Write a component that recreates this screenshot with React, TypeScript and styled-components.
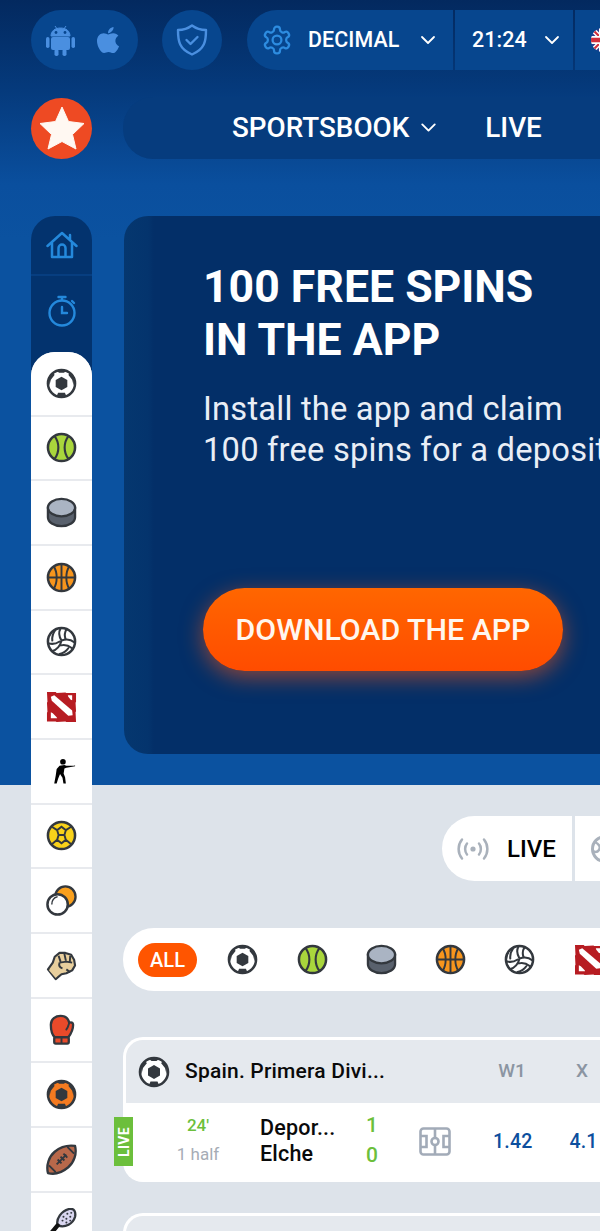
import React from "react";
import styled, { createGlobalStyle } from "styled-components";
import { FaApple } from "react-icons/fa";
import { ChevronDown } from "lucide-react";

const Global = createGlobalStyle`
  html, body { margin: 0; padding: 0; background: #dde3ea; }
  * { box-sizing: border-box; }
  body { font-family: Roboto, "Liberation Sans", sans-serif; }
  svg { flex: none; }
`;

const Page = styled.div`
  width: 600px; height: 1231px; overflow: hidden;
  background: linear-gradient(180deg, #03295f 0, #053a7c 90px, #0a4f9e 185px, #0b52a0 240px, #0b52a0 785px, #dde3ea 785px);
`;
const TopBar = styled.header`display: flex; padding: 10px 0 0 31px; height: 70px;`;
const IconPill = styled.div<{ $w: number; $ml?: number; $gap?: number }>`
  flex: none; display: flex; align-items: center; justify-content: center; gap: ${p => p.$gap ?? 0}px;
  width: ${p => p.$w}px; height: 60px; margin-left: ${p => p.$ml ?? 0}px;
  border-radius: 30px; background: #07468e; color: #4a8fe0;
`;
const Segments = styled.div`flex: none; display: flex; gap: 2px; margin-left: 25px; color: #fff;`;
const Segment = styled.div<{ $w: number; $round?: boolean; $pl: number }>`
  flex: none; display: flex; align-items: center; width: ${p => p.$w}px; height: 60px; padding-left: ${p => p.$pl}px;
  background: #07468e; border-radius: ${p => (p.$round ? "30px 0 0 30px" : "0")};
  font-size: 21.4px; font-weight: 500; letter-spacing: .1px;
`;
const SegLabel = styled.span`margin: -2px 0 0 15px;`;
const SegTime = styled.span`margin-top: -2px;`;
const SegChevron = styled(ChevronDown)<{ $ml: number }>`margin-left: ${p => p.$ml}px; flex: none;`;
const NavRow = styled.div`display: flex; align-items: center; margin-top: 27px; padding-left: 31px; height: 62px;`;
const Logo = styled.div`
  flex: none; width: 61px; height: 61px; border-radius: 50%; background: #ee4a23;
  display: flex; align-items: center; justify-content: center;
`;
const NavPill = styled.nav`
  flex: none; display: flex; align-items: center; width: 520px; height: 62px; margin-left: 31px; padding: 0 0 2px 109px;
  border-radius: 30px; background: #063c7e; color: #fff; font-size: 27.8px; font-weight: 500;
`;
const NavLive = styled.span`margin-left: 44px;`;
const NavChevron = styled(ChevronDown)`margin-left: 7px; flex: none;`;

const Main = styled.div`display: flex; margin-top: 57px; padding-left: 31px; align-items: flex-start;`;
const Rail = styled.aside`
  flex: none; width: 61px; border-radius: 24px 24px 0 0;
  background: linear-gradient(180deg, #03336e 0, #03336e 170px, transparent 170px);
`;
const RailTop = styled.div<{ $h: number; $pb?: number; $line?: boolean }>`
  height: ${p => p.$h}px; display: flex; align-items: center; justify-content: center; padding-bottom: ${p => p.$pb ?? 0}px;
  border-bottom: ${p => (p.$line ? "2px solid #073e80" : "none")};
  color: #2489dc;
`;
const RailList = styled.div`
  display: flex; flex-direction: column; gap: 2px; background: #e8eaee; border-radius: 24px 24px 0 0; overflow: hidden;
`;
const RailItem = styled.div`
  height: 62.67px; flex: none; background: #fff; display: flex; align-items: center; justify-content: center;
`;
const Content = styled.main`flex: none; width: 520px; margin-left: 32px;`;
const Banner = styled.section`
  height: 538px; padding: 45px 0 0 80px; border-radius: 24px 0 0 24px; color: #fff; white-space: nowrap;
  background: linear-gradient(90deg, #05376f 0, #04346d 24px, #032f68 30px);
`;
const Title = styled.h1`margin: 0 0 0 -1px; font-size: 44.6px; line-height: 53px; font-weight: 700;`;
const Sub = styled.p`margin: 22px 0 0 -1px; font-size: 32.7px; line-height: 41px; font-weight: 400; color: #e9eef6; letter-spacing: .2px;`;
const Download = styled.div`
  margin: 117px 0 0 -1px; width: 360px; height: 83px; border-radius: 42px; display: flex; align-items: center; justify-content: center;
  background: linear-gradient(180deg, #ff6600, #ff4c00); box-shadow: 0 6px 22px rgba(255, 90, 20, .55);
  font-size: 30.3px; font-weight: 500; color: #fff6ee;
`;
const Tabs = styled.div`display: flex; gap: 3px; margin: 62px 0 0 318px; width: 300px; height: 65px;`;
const Tab = styled.div<{ $round?: boolean; $w: number }>`
  flex: none; display: flex; align-items: center; width: ${p => p.$w}px; background: #fff; padding-left: 15px; gap: 18px;
  border-radius: ${p => (p.$round ? "33px 0 0 33px" : "0")}; color: #000; font-size: 24px; font-weight: 500;
`;
const Strip = styled.div`
  display: flex; align-items: center; gap: 38.3px; margin-top: 47px; height: 63px; width: 520px; margin-left: -1px; padding-left: 15px;
  background: #fff; border-radius: 31px 0 0 31px; overflow: hidden;
`;
const All = styled.div`
  flex: none; width: 59px; height: 34px; margin-right: -8px; border-radius: 17px; background: #ff5500; color: #fff; font-size: 20px; font-weight: 500;
  display: flex; align-items: center; justify-content: center;
`;
const Card = styled.section<{ $mt: number }>`
  position: relative; margin-top: ${p => p.$mt}px; margin-left: -1px; width: 520px; height: 145px; background: #fff; border-radius: 20px 0 0 20px; padding: 3px 0 0 3px;
`;
const CardHead = styled.div`
  display: flex; align-items: center; height: 63px; padding-left: 12px; border-radius: 17px 0 0 0; background: #e5e9ee;
`;
const League = styled.div`margin: -2px 0 0 15px; width: 302px; flex: none; font-size: 21px; font-weight: 500; color: #0a0a0a; letter-spacing: .2px; white-space: nowrap;`;
const HeadCol = styled.div<{ $w: number; $ml?: number }>`width: ${p => p.$w}px; margin-left: ${p => p.$ml ?? 0}px; margin-top: -2px; text-align: center; color: #8b95a2; font-size: 19px; font-weight: 500; flex: none;`;
const LiveTag = styled.div`
  position: absolute; left: -9px; top: 80px; width: 19px; height: 49px; background: #6cbf3c; color: #fff;
  display: flex; align-items: center; justify-content: center;
`;
const LiveText = styled.span`transform: rotate(-90deg); font-size: 14px; font-weight: 700; letter-spacing: .3px;`;
const Row = styled.div`display: flex; align-items: center; height: 76px; padding-left: 37px;`;
const TimeCol = styled.div`flex: none; width: 70px; display: flex; flex-direction: column; align-items: center; gap: 9px; margin-top: -4px;`;
const Minute = styled.div`font-size: 17px; font-weight: 500; line-height: 20px; color: #6cbf3c;`;
const Half = styled.div`font-size: 17px; font-weight: 400; line-height: 20px; color: #a6acb5;`;
const Teams = styled.div`flex: none; margin-left: 27px; width: 96px; font-size: 21.5px; font-weight: 500; line-height: 26px; color: #0a0a0a; letter-spacing: .2px;`;
const Scores = styled.div`flex: none; width: 32px; margin-top: -2px; text-align: center; font-size: 21px; font-weight: 500; line-height: 30px; color: #6cbf3c;`;
const FieldBox = styled.div`flex: none; margin-left: 31px; width: 32px; height: 29px; display: flex;`;
const Odd = styled.div<{ $ml: number }>`flex: none; margin-left: ${p => p.$ml}px; font-size: 19.5px; font-weight: 500; color: #0d4f9e; white-space: nowrap; letter-spacing: .2px;`;

const D = "#33383e";

type Kind = "soccer" | "tennis" | "puck" | "basket" | "volley" | "dota" | "cs" | "hand" | "balls" | "fist" | "glove" | "orange" | "football" | "racket";

const Sport = ({ kind, size = 31 }: { kind: Kind; size?: number }) => {
  const ball = (fill: string) => <circle cx="16" cy="16" r="14" fill={fill} stroke={D} strokeWidth="2.6" />;
  const soccerInner = (
    <>
      <path d="M16 9l6 3.500v7L16 23l-6-3.500v-7z" fill={D} />
      <path d="M11 29l1.500-3.500h7L21 29l-5 1zM3 11l4-5.500 2 1.500-4 5-1.500 6zM29 11l-4-5.500-2 1.500 4 5 1.500 6zM11 3h10l-2.500 2h-5z" fill={D} />
    </>
  );
  switch (kind) {
    case "soccer":
      return <svg width={size} height={size} viewBox="0 0 32 32">{ball("#fff")}{soccerInner}</svg>;
    case "orange":
      return <svg width={size} height={size} viewBox="0 0 32 32">{ball("#f47a20")}{soccerInner}</svg>;
    case "tennis":
      return (
        <svg width={size} height={size} viewBox="0 0 32 32">
          {ball("#a9d63c")}
          <path d="M9 4.500c5 6.500 5 16.500 0 23M23 4.500c-5 6.500-5 16.500 0 23" fill="none" stroke={D} strokeWidth="2.200" />
        </svg>
      );
    case "puck":
      return (
        <svg width={size} height={size} viewBox="0 0 32 32">
          <path d="M2 11v10c0 5 6 9 14 9s14-4 14-9V11z" fill="#59616d" stroke={D} strokeWidth="2.400" />
          <ellipse cx="16" cy="11" rx="14" ry="9" fill="#aab4c3" stroke={D} strokeWidth="2.400" />
        </svg>
      );
    case "basket":
      return (
        <svg width={size} height={size} viewBox="0 0 32 32">
          {ball("#f7951d")}
          <path d="M16 2v28M2 16h28M8 4.500c4 6 4 17 0 23M24 4.500c-4 6-4 17 0 23" fill="none" stroke={D} strokeWidth="2" />
        </svg>
      );
    case "volley":
      return (
        <svg width={size} height={size} viewBox="0 0 32 32">
          {ball("#fff")}
          <path d="M16 15C13 10 13 6 15 2.500M16 15C21 13 26 14 29.500 17M16 15C15 20 11 25 6 26M21 3.500C19 7 19 10 20 13M10 3.500C7.500 7 6 11 6.500 15M3 18C7 19 11 18 14 16M27 23C23 20 19 19 15.500 20M14 29C18 28 21 26 23 23" fill="none" stroke={D} strokeWidth="2.100" strokeLinecap="round" />
        </svg>
      );
    case "dota":
      return (
        <svg width={size} height={size} viewBox="0 0 32 32">
          <path d="M1 1h9l1 1 9-.500 1 .500h10v9l-.500 1 .500 9-.500 1 .500 10H21l-1-.500-9 .500-1-.500H1v-9l.500-1L1 12l.500-1z" fill="#b71c22" />
          <path d="M5 6l3.500-1.500L27 20l.5 5-4.500.5L6 10z" fill="#fff" />
          <path d="M22.500 4.500h4.500v5l-1.500-.5-2.500-3zM5 22l2 1 4 4 .500 1H5z" fill="#fff" />
        </svg>
      );
    case "cs":
      return (
        <svg width={size} height={size} viewBox="0 0 32 32">
          <circle cx="17.500" cy="6" r="2.900" fill="#000" />
          <path d="M14 10l5-.8 2 .8h8l1-.5v1.200l-9 1.500-2 .8-.8 5 1.500 4 .8 6.500h-2.500l-1-6-2.500-4-2 5-1.500 5h-2.500l1.500-8 1-7z" fill="#000" />
        </svg>
      );
    case "hand":
      return (
        <svg width={size} height={size} viewBox="0 0 32 32">
          {ball("#f9d21a")}
          <path d="M16 7l4.500 3.500-1.500 5 1.500 5-4.500 3.500-4.500-3.500 1.500-5-1.500-5zM13 15.500h6M11.500 10.500L6 7M20.500 10.500L26 7M11.500 20.500L6 25M20.500 20.500L26 25" fill="none" stroke={D} strokeWidth="2" />
        </svg>
      );
    case "balls":
      return (
        <svg width={size} height={size} viewBox="0 0 32 32">
          <circle cx="20" cy="12" r="10.500" fill="#f9a01e" stroke={D} strokeWidth="2.400" />
          <circle cx="12" cy="20" r="10.500" fill="#fff" stroke={D} strokeWidth="2.600" />
          <path d="M6 20c0-4 2-7 6-8" fill="none" stroke={D} strokeWidth="1.500" />
        </svg>
      );
    case "fist":
      return (
        <svg width={size} height={size} viewBox="0 0 32 32">
          <path d="M2 20l5-7 2-6 5-4 6 0 6 2 3 5 1 6-3 5-6 3-5 1-6 5z" fill="#e8cf9d" stroke={D} strokeWidth="2.200" strokeLinejoin="round" />
          <path d="M13 6l2 6M19 4l1.500 7M25 6l-.500 7M14 13l7-1 6 1M14 13c-1 3 0 5 3 6M21 20l4 3" fill="none" stroke={D} strokeWidth="2" />
          <path d="M3 21l7 8 2-3-6-6z" fill="#e8cf9d" />
        </svg>
      );
    case "glove":
      return (
        <svg width={size} height={size} viewBox="0 0 32 32">
          <path d="M9 24c-3-3-4-8-4-13 0-6 5-9 10-9 6 0 8 3 9 7 2-1 4 0 4 2 0 4-2 9-5 13z" fill="#ea4a2a" stroke={D} strokeWidth="2.400" strokeLinejoin="round" />
          <rect x="8.500" y="24" width="15" height="6.500" rx="1.500" fill="#ea4a2a" stroke={D} strokeWidth="2.400" />
          <path d="M16 24v6M24 9c-1 3-1 5-3 7" fill="none" stroke={D} strokeWidth="2" strokeLinecap="round" />
        </svg>
      );
    case "football":
      return (
        <svg width={size} height={size} viewBox="0 0 32 32">
          <path d="M2 30c-2-8 1-17 7-22S23 1 30 2c2 8-1 17-7 22S9 32 2 30z" fill="#b8684a" stroke={D} strokeWidth="2.400" strokeLinejoin="round" />
          <path d="M3 22l7 7M22 3l7 7M11 21l10-10M12 16l4 4M15 13l4 4M18 10l4 4" fill="none" stroke={D} strokeWidth="2" />
        </svg>
      );
    case "racket":
      return (
        <svg width={size} height={size} viewBox="0 0 32 32">
          <path d="M12 18C10 11 16 3 24 1c5-1 7 3 6 8-2 7-10 12-18 9z" fill="#d9d6f0" stroke={D} strokeWidth="2.400" />
          <path d="M12 18L2 30" stroke="#111" strokeWidth="4.500" strokeLinecap="round" />
          <path d="M18 9h.1M22 6h.1M26 5h.1M17 13h.1M21 11h.1M25 9h.1M21 15h.1M25 13h.1" stroke={D} strokeWidth="2" strokeLinecap="round" />
        </svg>
      );
  }
};

const Android = () => (
  <svg width="29" height="31" viewBox="0 0 29 31" fill="currentColor">
    <path d="M5 11C5 6 9 3 14.500 3S24 6 24 11zM9 1l2.500 3.500M20 1l-2.500 3.500" stroke="currentColor" strokeWidth="1" />
    <circle cx="10" cy="7.500" r="1.400" fill="#07468e" />
    <circle cx="19" cy="7.500" r="1.400" fill="#07468e" />
    <rect x="5" y="12" width="19" height="13" rx="2" />
    <rect x="0" y="12" width="3.500" height="11" rx="1.700" />
    <rect x="25.500" y="12" width="3.500" height="11" rx="1.700" />
    <rect x="8.500" y="24" width="4" height="7" rx="1.800" />
    <rect x="16.500" y="24" width="4" height="7" rx="1.800" />
  </svg>
);
const Shield = () => (
  <svg width="32" height="32" viewBox="0 0 32 32" fill="none" stroke="currentColor" strokeWidth="2.400" strokeLinejoin="round" strokeLinecap="round">
    <path d="M16 1.500c4 3 8 4.500 14 4.500 0 11-1 19-14 24.500C3 25 2 17 2 6c6 0 10-1.500 14-4.500z" />
    <path d="M10.500 16l4 4 7-7" />
  </svg>
);
const Gear = () => (
  <svg width="32" height="32" viewBox="0 0 24 24" fill="none" stroke="#2d8ce0" strokeWidth="1.700" strokeLinejoin="round">
    <path d="M12.220 2h-.44a2 2 0 0 0-2 2v.180a2 2 0 0 1-1 1.730l-.430.250a2 2 0 0 1-2 0l-.150-.080a2 2 0 0 0-2.730.730l-.220.380a2 2 0 0 0 .730 2.730l.150.100a2 2 0 0 1 1 1.720v.510a2 2 0 0 1-1 1.740l-.150.090a2 2 0 0 0-.730 2.730l.220.380a2 2 0 0 0 2.730.730l.150-.080a2 2 0 0 1 2 0l.430.250a2 2 0 0 1 1 1.730V20a2 2 0 0 0 2 2h.440a2 2 0 0 0 2-2v-.180a2 2 0 0 1 1-1.730l.430-.250a2 2 0 0 1 2 0l.150.080a2 2 0 0 0 2.730-.730l.220-.390a2 2 0 0 0-.730-2.730l-.150-.080a2 2 0 0 1-1-1.740v-.500a2 2 0 0 1 1-1.740l.150-.090a2 2 0 0 0 .730-2.730l-.220-.380a2 2 0 0 0-2.730-.730l-.150.080a2 2 0 0 1-2 0l-.430-.250a2 2 0 0 1-1-1.730V4a2 2 0 0 0-2-2z" />
    <circle cx="12" cy="12" r="3.300" />
  </svg>
);
const Flag = () => (
  <svg width="32" height="32" viewBox="0 0 32 32">
    <defs><clipPath id="fc"><circle cx="16" cy="16" r="12" /></clipPath></defs>
    <g clipPath="url(#fc)">
      <rect width="32" height="32" fill="#2c3e8f" />
      <path d="M2 2l28 28M30 2L2 30" stroke="#fff" strokeWidth="5" />
      <path d="M2 2l28 28M30 2L2 30" stroke="#d22f3c" strokeWidth="2" />
      <path d="M16 0v32M0 16h32" stroke="#fff" strokeWidth="8" />
      <path d="M16 0v32M0 16h32" stroke="#d22f3c" strokeWidth="4.500" />
    </g>
  </svg>
);
const Star = () => (
  <svg width="46" height="44" viewBox="0 0 46 44">
    <path d="M23 1l6.500 14.500L45 17.500 33.500 28.500 37 43 23 35.500 9 43l3.500-14.500L1 17.500l15.500-2z" fill="#fff8f2" stroke="#fff8f2" strokeWidth="1" strokeLinejoin="round" />
  </svg>
);
const Home = () => (
  <svg width="32" height="28" viewBox="0 0 32 28" fill="none" stroke="currentColor" strokeWidth="2.500" strokeLinejoin="round" strokeLinecap="round">
    <path d="M1.500 15L16 2l14.500 13M24 8V4" />
    <path d="M6 12v14h20V12M12.500 26v-9a3.500 3.500 0 0 1 7 0v9" />
  </svg>
);
const Timer = () => (
  <svg width="28" height="32" viewBox="0 0 28 32" fill="none" stroke="currentColor" strokeWidth="2.400" strokeLinecap="round">
    <circle cx="14" cy="18" r="12.500" />
    <path d="M10.500 2h7M14 2v3M24 6l2 2M14 12v6h5" />
  </svg>
);
const Radio = () => (
  <svg width="32" height="24" viewBox="0 0 32 24" fill="none" stroke="#a9b1bb" strokeWidth="2.500" strokeLinecap="round">
    <circle cx="16" cy="12" r="2.600" fill="#a9b1bb" stroke="none" />
    <path d="M10 6.500c-2.500 3-2.500 8 0 11M22 6.500c2.500 3 2.500 8 0 11M5 2.500c-4.500 5.500-4.500 13.500 0 19M27 2.500c4.500 5.500 4.500 13.500 0 19" />
  </svg>
);
const Globe = () => (
  <svg width="30" height="30" viewBox="0 0 30 30" fill="none" stroke="#a9b1bb" strokeWidth="3">
    <circle cx="15" cy="15" r="12.500" />
    <path d="M5 8c4 2 6 5 4 8s-5 2-6 1M20 4c-2 4-1 7 3 8l4-1M14 27c-1-4 1-7 5-7s4 3 4 4" strokeWidth="2.500" />
  </svg>
);
const Field = () => (
  <svg width="32" height="29" viewBox="0 0 32 29" fill="none" stroke="#a2abb8" strokeWidth="2.600">
    <rect x="1.500" y="1.500" width="29" height="26" rx="3" />
    <path d="M16 1.500v26M1.500 9h6v11h-6M30.500 9h-6v11h6" />
    <circle cx="16" cy="14.500" r="3.500" fill="#fff" />
  </svg>
);

const railKinds: Kind[] = ["soccer", "tennis", "puck", "basket", "volley", "dota", "cs", "hand", "balls", "fist", "glove", "orange", "football", "racket"];
const stripKinds: Kind[] = ["soccer", "tennis", "puck", "basket", "volley", "dota"];

export default function App() {
  return (
    <Page>
      <Global />
      <TopBar>
        <IconPill $w={107} $gap={18}><Android /><FaApple size={30} /></IconPill>
        <IconPill $w={60} $ml={24}><Shield /></IconPill>
        <Segments>
          <Segment $w={206} $round $pl={14}><Gear /><SegLabel>DECIMAL</SegLabel><SegChevron $ml={17} size={24} strokeWidth={1.800} /></Segment>
          <Segment $w={118} $pl={17}><SegTime>21:24</SegTime><SegChevron $ml={13} size={24} strokeWidth={1.800} /></Segment>
          <Segment $w={60} $pl={12}><Flag /></Segment>
        </Segments>
      </TopBar>
      <NavRow>
        <Logo><Star /></Logo>
        <NavPill>
          SPORTSBOOK<NavChevron size={25} strokeWidth={1.800} />
          <NavLive>LIVE</NavLive>
        </NavPill>
      </NavRow>
      <Main>
        <Rail>
          <RailTop $h={60} $line><Home /></RailTop>
          <RailTop $h={76} $pb={6}><Timer /></RailTop>
          <RailList>
            {railKinds.map((k, i) => (
              <RailItem key={i}><Sport kind={k} /></RailItem>
            ))}
          </RailList>
        </Rail>
        <Content>
          <Banner>
            <Title>100 FREE SPINS<br />IN THE APP</Title>
            <Sub>Install the app and claim<br />100 free spins for a deposit</Sub>
            <Download>DOWNLOAD THE APP</Download>
          </Banner>
          <Tabs>
            <Tab $round $w={130}><Radio />LIVE</Tab>
            <Tab $w={120}><Globe /></Tab>
          </Tabs>
          <Strip>
            <All>ALL</All>
            {stripKinds.map((k, i) => <Sport key={i} kind={k} />)}
          </Strip>
          <Card $mt={46}>
            <LiveTag><LiveText>LIVE</LiveText></LiveTag>
            <CardHead>
              <Sport kind="soccer" size={32} />
              <League>Spain. Primera Divi...</League>
              <HeadCol $w={50}>W1</HeadCol>
              <HeadCol $w={40} $ml={25}>X</HeadCol>
            </CardHead>
            <Row>
              <TimeCol><Minute>24'</Minute><Half>1 half</Half></TimeCol>
              <Teams>Depor...<br />Elche</Teams>
              <Scores>1<br />0</Scores>
              <FieldBox><Field /></FieldBox>
              <Odd $ml={42}>1.42</Odd>
              <Odd $ml={37}>4.1</Odd>
            </Row>
          </Card>
          <Card $mt={31}>
            <CardHead />
          </Card>
        </Content>
      </Main>
    </Page>
  );
}
